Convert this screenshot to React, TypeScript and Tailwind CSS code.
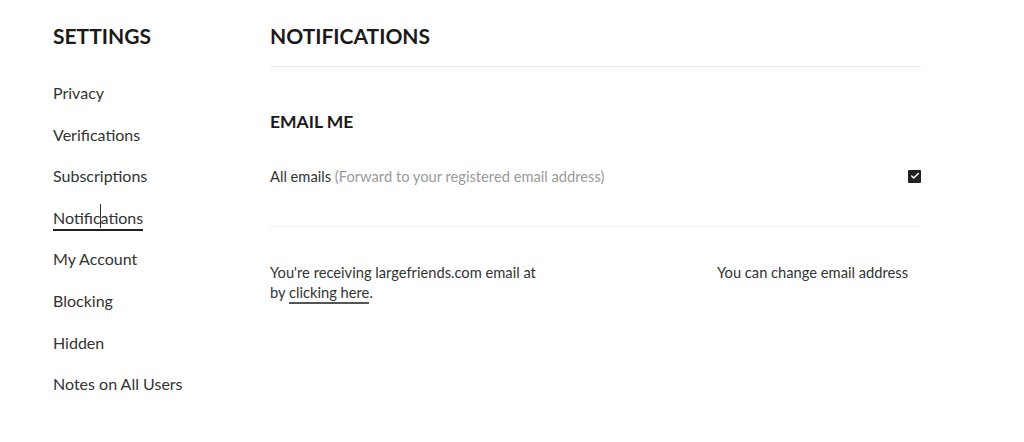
import { Check } from "lucide-react";

const NAV = [
  "Privacy",
  "Verifications",
  "Subscriptions",
  "Notifications",
  "My Account",
  "Blocking",
  "Hidden",
  "Notes on All Users",
];

export default function App() {
  return (
    <div
      className="w-[1024px] h-[442px] bg-white text-[#333] flex overflow-hidden"
      style={{ fontFamily: "Lato, 'Noto Sans', sans-serif" }}
    >
      {/* sidebar */}
      <aside className="w-[270px] pl-[53px] pt-[23px] shrink-0">
        <h2 className="text-[21px] font-bold text-[#1a1a1a] leading-[25px]">SETTINGS</h2>
        <ul className="mt-[34px] flex flex-col">
          {NAV.map((item) => (
            <li key={item} className="h-[41.6px] flex items-start">
              <span
                className={
                  "text-[16px] leading-[22px] " +
                  (item === "Notifications" ? "border-b-2 border-[#222] relative" : "")
                }
              >
                {item}
                {item === "Notifications" && (
                  <span className="absolute left-[47px] -top-[3px] w-px h-[24px] bg-[#333]" />
                )}
              </span>
            </li>
          ))}
        </ul>
      </aside>

      {/* main */}
      <main className="w-[651px] pt-[23px]">
        <h1 className="text-[21px] font-bold text-[#1a1a1a] leading-[25px]">NOTIFICATIONS</h1>
        <div className="mt-[18px] border-t border-[#ebebeb]" />

        <h3 className="mt-[44px] text-[17.5px] font-bold text-[#1a1a1a] leading-[21px]">EMAIL ME</h3>

        <div className="mt-[35px] flex items-center justify-between">
          <p className="text-[14.7px] leading-[18px]">
            All emails <span className="text-[#9a9a9a]">(Forward to your registered email address)</span>
          </p>
          <span className="w-[13px] h-[13px] bg-[#222] rounded-[1px] flex items-center justify-center">
            <Check className="w-[10px] h-[10px] text-white" strokeWidth={3.5} />
          </span>
        </div>

        <div className="mt-[41px] border-t border-[#eeeeee]" />

        <div className="mt-[35px] flex justify-between text-[14.7px] leading-[20px]">
          <p className="w-[300px]">
            You're receiving largefriends.com email at
            <br />
            by <span className="border-b-2 border-[#555] pb-[1px]">clicking here</span>.
          </p>
          <p className="pr-[13px]">You can change email address</p>
        </div>
      </main>
    </div>
  );
}
